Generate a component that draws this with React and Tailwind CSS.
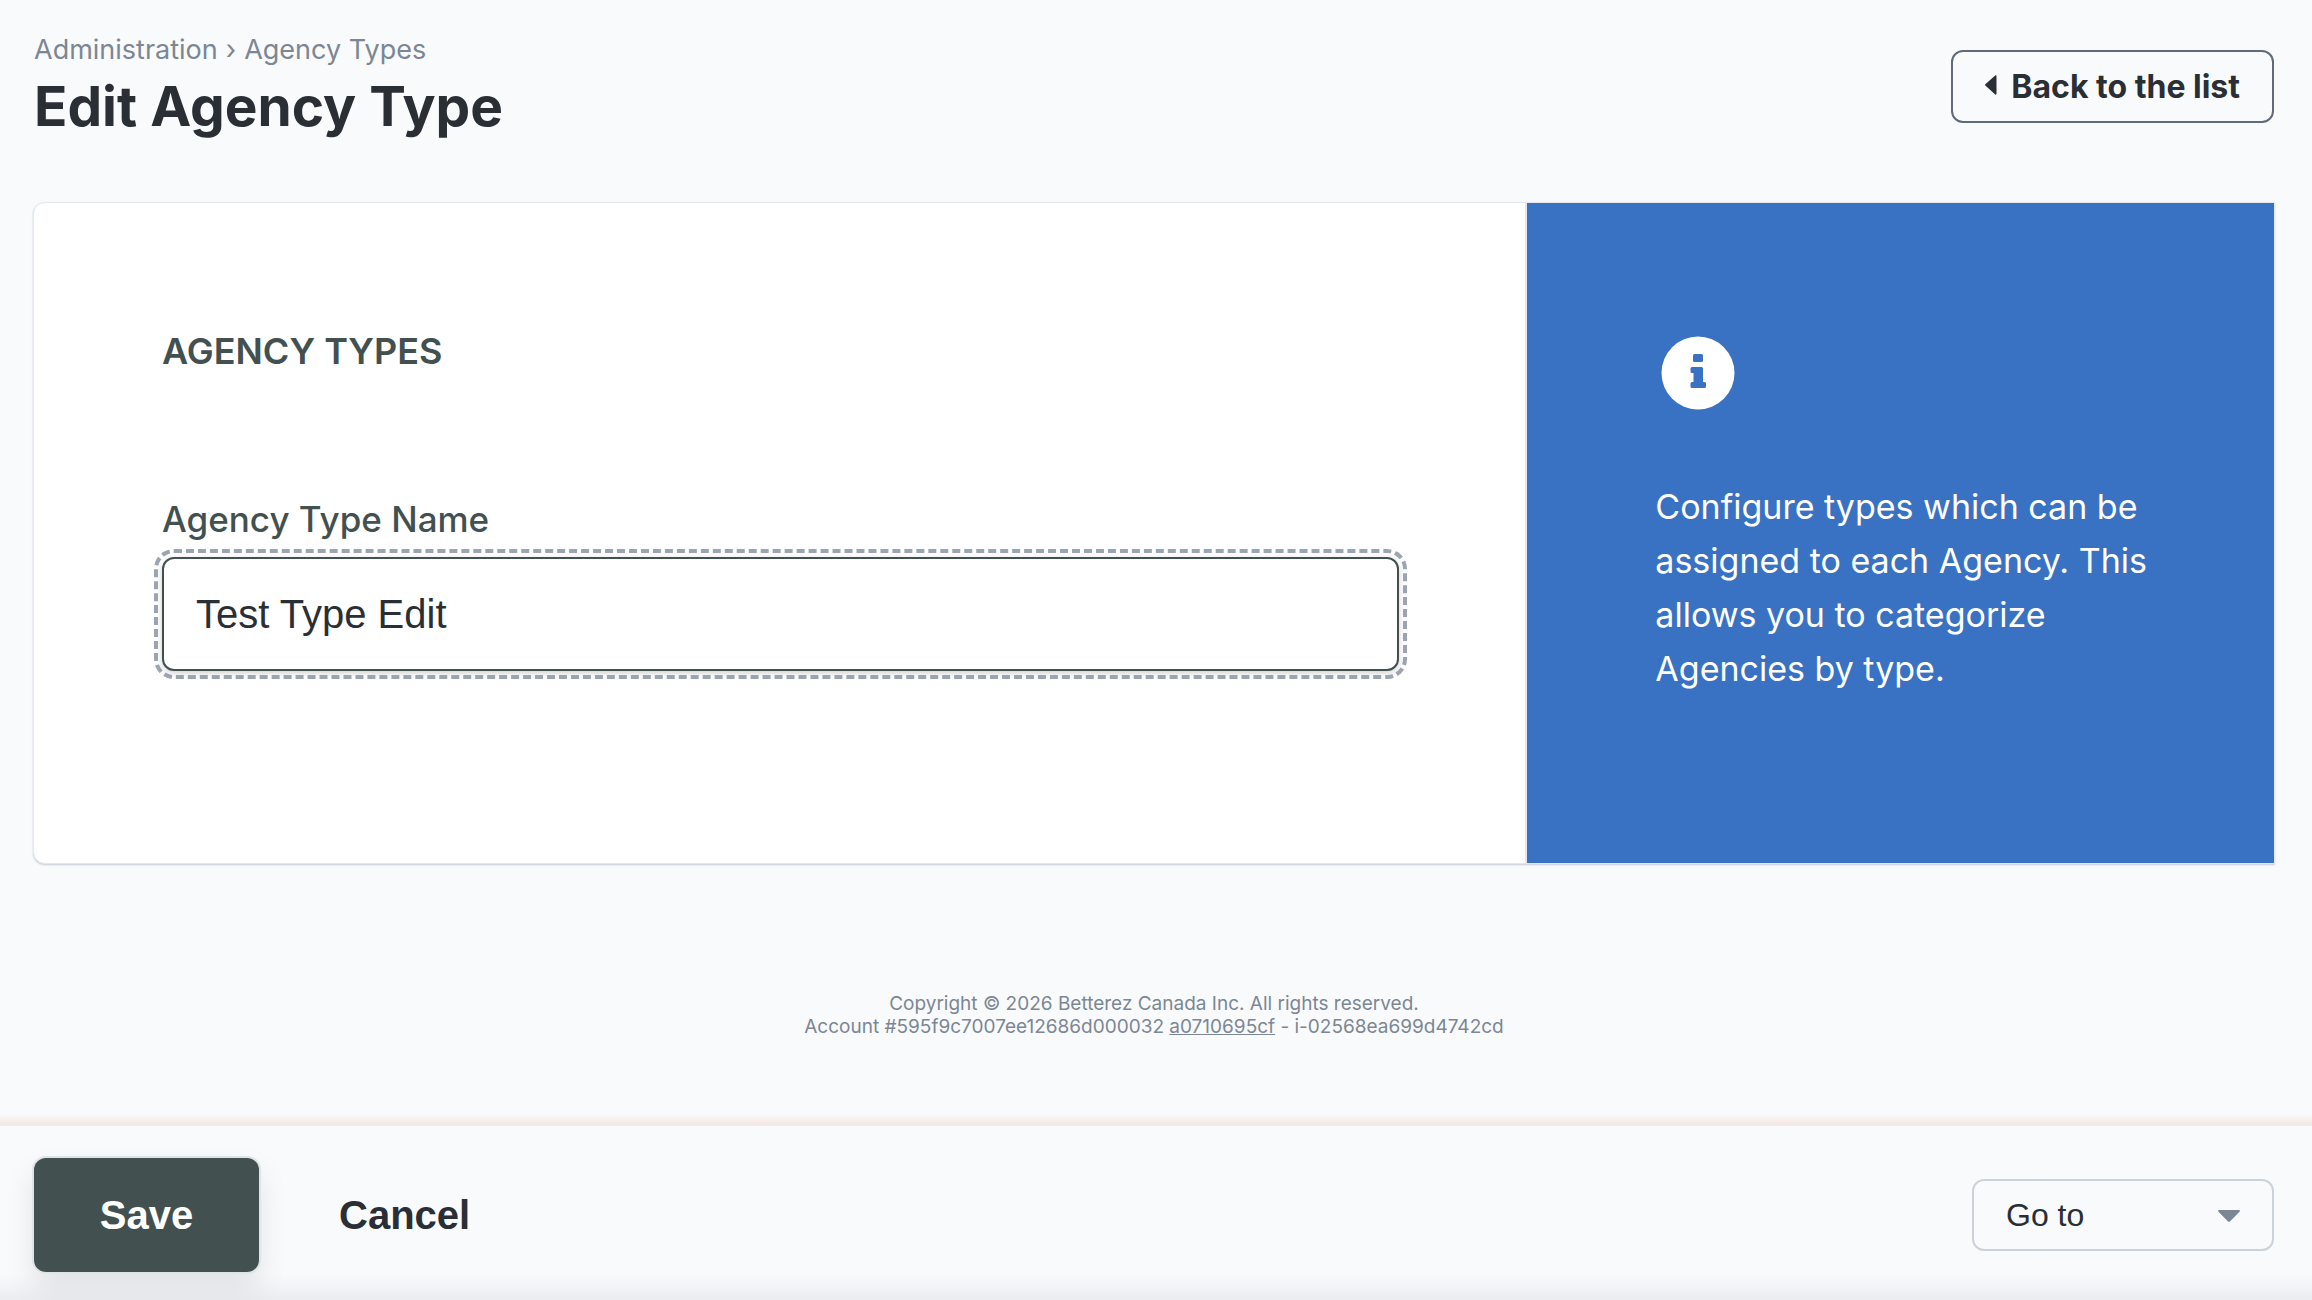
import { useState } from "react";

function InfoIcon() {
  return (
    <svg viewBox="0 0 74 74" className="ml-1.5 size-[74px]" aria-hidden="true">
      <circle cx="37" cy="37" r="36.5" fill="#fff" />
      <g fill="#3971c3">
        <rect x="32" y="18" width="10" height="8" rx="1.5" />
        <path d="M31 31h9.500a1.500 1.500 0 0 1 1.500 1.500V46h1.500a1.500 1.500 0 0 1 1.500 1.500v3a1.500 1.500 0 0 1-1.500 1.500H31a1.500 1.500 0 0 1-1.500-1.500v-3a1.500 1.500 0 0 1 1.500-1.500h1.500v-9H31a1.500 1.500 0 0 1-1.500-1.500v-3a1.500 1.500 0 0 1 1.500-1.500z" />
      </g>
    </svg>
  );
}

function Header() {
  return (
    <header className="flex items-start justify-between px-[34px]">
      <div>
        <nav aria-label="Breadcrumb" className="flex gap-2 pt-8 text-[27px] leading-9 text-[#7b8794]">
          <a href="#administration">Administration</a>
          <span>›</span>
          <a href="#agency-types">Agency Types</a>
        </nav>
        <h1 className="text-[55px] leading-[76px] font-bold text-[#2a2e35]">Edit Agency Type</h1>
      </div>
      <a
        href="#list"
        className="mt-[50px] mr-1 flex h-[73px] items-center gap-3.5 rounded-xl border-2 border-[#5f6b7a] px-8 text-[32px] font-bold text-[#2a2e35]"
      >
        <svg viewBox="0 0 12 20" className="-mt-1 h-5 w-3" fill="currentColor" aria-hidden="true">
          <path d="M10.200 .6 .6 9a1.200 1.200 0 0 0 0 1.800l9.600 8.600c.6.500 1.300.2 1.300-.6V1.200c0-.8-.7-1.100-1.300-.6z" />
        </svg>
        Back to the list
      </a>
    </header>
  );
}

export default function App() {
  const [name, setName] = useState("Test Type Edit");
  return (
    <div className="flex min-h-screen flex-col bg-[#f9fafc] font-['Inter',sans-serif]">
      <Header />

      <main className="mr-[37px] ml-[33px] mt-[58px] grid grid-cols-[2fr_1fr] rounded-l-xl border border-[#e4e7ed] bg-white shadow-[0_1px_2px_#c3cbd4]">
        <section className="border-r-2 border-[#e4e7eb] pt-[126px] pr-[126px] pb-48 pl-32">
          <h2 className="text-[36px] leading-[44px] font-semibold text-[#435050]">AGENCY TYPES</h2>
          <label htmlFor="type-name" className="mt-[120px] block text-[35px] leading-[52px] font-medium text-[#435050]">
            Agency Type Name
          </label>
          <input
            id="type-name"
            value={name}
            onChange={(e) => setName(e.target.value)}
            className="mt-3 h-[114px] w-full rounded-xl border-2 border-[#435050] bg-white px-8 font-['Liberation_Sans',sans-serif] text-[40px] text-[#2a2e35] shadow-[0_2px_6px_#00000030] outline-4 outline-offset-4 outline-[#9aa5b1] outline-dashed"
          />
        </section>
        <aside className="bg-[#3971c3] pt-[133px] pr-[110px] pl-32 text-white">
          <InfoIcon />
          <p className="mt-[70px] text-[34px] leading-[54px]">
            Configure types which can be assigned to each Agency. This allows you to categorize Agencies by type.
          </p>
        </aside>
      </main>

      <footer className="mt-32 pr-9 pl-8 text-center text-[19px] leading-[23px] text-[#7b8794]">
        <p>Copyright © 2026 Betterez Canada Inc. All rights reserved.</p>
        <p>
          Account #595f9c7007ee12686d000032{" "}
          <a href="#version" className="underline">a0710695cf</a> - i-02568ea699d4742cd
        </p>
      </footer>

      <div className="mt-auto">
        <div className="h-3 bg-linear-to-b from-[#f9fafc] to-[#f5eae1] to-80%" />
        <div className="flex h-[174px] items-center overflow-hidden bg-linear-to-t from-[#ebecf0] to-[#f9fafc] to-15% pt-1 pr-[38px] pl-[34px] font-['Liberation_Sans',sans-serif] text-[#2a2e35]">
          <button
            type="button"
            className="h-[114px] w-[225px] rounded-xl bg-[#435050] text-[40px] font-bold text-white shadow-[0_0_0_2px_#dfe4ea,0_14px_30px_#0000001a]"
          >
            Save
          </button>
          <button type="button" className="ml-20 text-[40px] font-bold">
            Cancel
          </button>
          <div className="relative ml-auto">
            <select
              aria-label="Go to"
              className="h-[72px] w-[302px] appearance-none rounded-xl border-2 border-[#cbd2d9] px-8 text-[32px]"
            >
              <option>Go to</option>
            </select>
            <svg
              viewBox="0 0 22 12"
              className="pointer-events-none absolute top-[31px] right-[34px] h-3 w-[22px]"
              fill="#7b8794"
              aria-hidden="true"
            >
              <path d="M1.200 0h19.600c1 0 1.400 1 .7 1.700l-9.300 9.500c-.7.700-1.700.7-2.400 0L.5 1.700C-.2 1 .2 0 1.200 0z" />
            </svg>
          </div>
        </div>
      </div>
    </div>
  );
}
